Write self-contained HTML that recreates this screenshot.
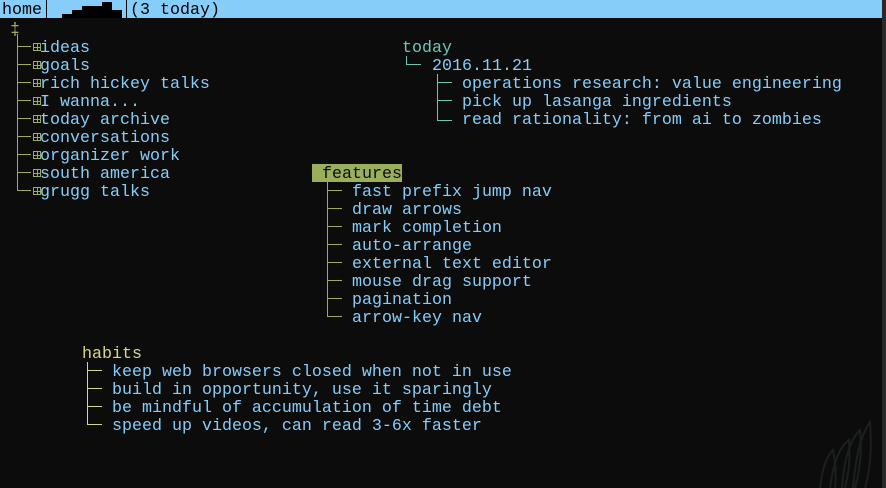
<!DOCTYPE html>
<html><head><meta charset="utf-8"><style>
body{margin:0;background:#0c0c0c;width:886px;height:488px;overflow:hidden;position:relative;font-family:"Liberation Mono","DejaVu Sans Mono",monospace;font-size:16.67px;}
.t{position:absolute;white-space:pre;line-height:18px;height:18px;color:#87cdf9;transform:translateY(4px);}
.l{position:absolute;}
.g{background:#9aae5c}.c{background:#6ec6b4}.y{background:#d6d68e}
.bx{position:absolute;width:6px;height:6px;border:1px solid #9aae5c;}
.bx:before{content:"";position:absolute;left:3px;top:0;width:1px;height:6px;background:#9aae5c}
.bx:after{content:"";position:absolute;top:3px;left:0;height:1px;width:6px;background:#9aae5c}
</style></head><body>
<div class="l" style="left:0;top:0;width:882px;height:18px;background:#87cdf9"></div>
<div class="l" style="left:46px;top:0;width:1px;height:18px;background:#0c0c0c"></div>
<div class="l" style="left:126px;top:0;width:1px;height:18px;background:#0c0c0c"></div>
<div class="l" style="left:0;top:18px;width:882px;height:2px;background:#0c0c0c"></div>
<div class="l" style="left:62px;top:14px;width:10px;height:4px;background:#000"></div>
<div class="l" style="left:72px;top:10px;width:10px;height:8px;background:#000"></div>
<div class="l" style="left:82px;top:6px;width:20px;height:12px;background:#000"></div>
<div class="l" style="left:102px;top:2px;width:10px;height:16px;background:#000"></div>
<div class="l" style="left:112px;top:10px;width:10px;height:8px;background:#000"></div>
<div class="t" style="left:2px;top:-2px;color:#000">home</div>
<div class="t" style="left:130px;top:-2px;color:#000">(3 today)</div>
<div class="l" style="left:882px;top:0;width:4px;height:488px;background:#2a2a2a"></div>

<div class="t" style="left:10px;top:18px;color:#9aae5c">‡</div>
<div class="l g" style="left:17px;top:34px;width:1px;height:156px"></div>
<div class="l g" style="left:17px;top:46px;width:14px;height:1px"></div><div class="bx" style="left:33px;top:43px"></div><div class="t" style="left:40px;top:36px">ideas</div>
<div class="l g" style="left:17px;top:64px;width:14px;height:1px"></div><div class="bx" style="left:33px;top:61px"></div><div class="t" style="left:40px;top:54px">goals</div>
<div class="l g" style="left:17px;top:82px;width:14px;height:1px"></div><div class="bx" style="left:33px;top:79px"></div><div class="t" style="left:40px;top:72px">rich hickey talks</div>
<div class="l g" style="left:17px;top:100px;width:14px;height:1px"></div><div class="bx" style="left:33px;top:97px"></div><div class="t" style="left:40px;top:90px">I wanna...</div>
<div class="l g" style="left:17px;top:118px;width:14px;height:1px"></div><div class="bx" style="left:33px;top:115px"></div><div class="t" style="left:40px;top:108px">today archive</div>
<div class="l g" style="left:17px;top:136px;width:14px;height:1px"></div><div class="bx" style="left:33px;top:133px"></div><div class="t" style="left:40px;top:126px">conversations</div>
<div class="l g" style="left:17px;top:154px;width:14px;height:1px"></div><div class="bx" style="left:33px;top:151px"></div><div class="t" style="left:40px;top:144px">organizer work</div>
<div class="l g" style="left:17px;top:172px;width:14px;height:1px"></div><div class="bx" style="left:33px;top:169px"></div><div class="t" style="left:40px;top:162px">south america</div>
<div class="l g" style="left:17px;top:190px;width:14px;height:1px"></div><div class="bx" style="left:33px;top:187px"></div><div class="t" style="left:40px;top:180px">grugg talks</div>

<div class="t" style="left:402px;top:36px;color:#6ec6b4">today</div>
<div class="l c" style="left:406px;top:56px;width:1px;height:9px"></div>
<div class="l c" style="left:406px;top:64px;width:15px;height:1px"></div>
<div class="t" style="left:432px;top:54px">2016.11.21</div>
<div class="l c" style="left:437px;top:74px;width:1px;height:47px"></div>
<div class="l c" style="left:437px;top:82px;width:15px;height:1px"></div><div class="t" style="left:462px;top:72px">operations research: value engineering</div>
<div class="l c" style="left:437px;top:100px;width:15px;height:1px"></div><div class="t" style="left:462px;top:90px">pick up lasanga ingredients</div>
<div class="l c" style="left:437px;top:120px;width:15px;height:1px"></div><div class="t" style="left:462px;top:108px">read rationality: from ai to zombies</div>

<div class="l g" style="left:312px;top:164px;width:90px;height:18px"></div>
<div class="t" style="left:322px;top:162px;color:#0c0c0c">features</div>
<div class="l g" style="left:327px;top:182px;width:1px;height:135px"></div>
<div class="l g" style="left:327px;top:190px;width:15px;height:1px"></div><div class="t" style="left:352px;top:180px">fast prefix jump nav</div>
<div class="l g" style="left:327px;top:208px;width:15px;height:1px"></div><div class="t" style="left:352px;top:198px">draw arrows</div>
<div class="l g" style="left:327px;top:226px;width:15px;height:1px"></div><div class="t" style="left:352px;top:216px">mark completion</div>
<div class="l g" style="left:327px;top:244px;width:15px;height:1px"></div><div class="t" style="left:352px;top:234px">auto-arrange</div>
<div class="l g" style="left:327px;top:262px;width:15px;height:1px"></div><div class="t" style="left:352px;top:252px">external text editor</div>
<div class="l g" style="left:327px;top:280px;width:15px;height:1px"></div><div class="t" style="left:352px;top:270px">mouse drag support</div>
<div class="l g" style="left:327px;top:298px;width:15px;height:1px"></div><div class="t" style="left:352px;top:288px">pagination</div>
<div class="l g" style="left:327px;top:316px;width:15px;height:1px"></div><div class="t" style="left:352px;top:306px">arrow-key nav</div>

<div class="t" style="left:82px;top:342px;color:#d6d68e">habits</div>
<div class="l y" style="left:87px;top:362px;width:1px;height:63px"></div>
<div class="l y" style="left:87px;top:370px;width:15px;height:1px"></div><div class="t" style="left:112px;top:360px">keep web browsers closed when not in use</div>
<div class="l y" style="left:87px;top:388px;width:15px;height:1px"></div><div class="t" style="left:112px;top:378px">build in opportunity, use it sparingly</div>
<div class="l y" style="left:87px;top:406px;width:15px;height:1px"></div><div class="t" style="left:112px;top:396px">be mindful of accumulation of time debt</div>
<div class="l y" style="left:87px;top:424px;width:15px;height:1px"></div><div class="t" style="left:112px;top:414px">speed up videos, can read 3-6x faster</div>

<svg style="position:absolute;left:815px;top:420px" width="65" height="68" viewBox="0 0 65 68">
<g fill="none" stroke="#1a1f1f" stroke-width="2">
<path d="M5 68 Q8 40 18 30 Q22 50 20 68"/>
<path d="M15 68 Q20 30 34 20 Q36 45 30 68"/>
<path d="M27 68 Q30 25 45 10 Q48 40 40 68"/>
<path d="M38 68 Q42 20 55 2 Q58 40 50 68"/>
</g></svg>
</body></html>
